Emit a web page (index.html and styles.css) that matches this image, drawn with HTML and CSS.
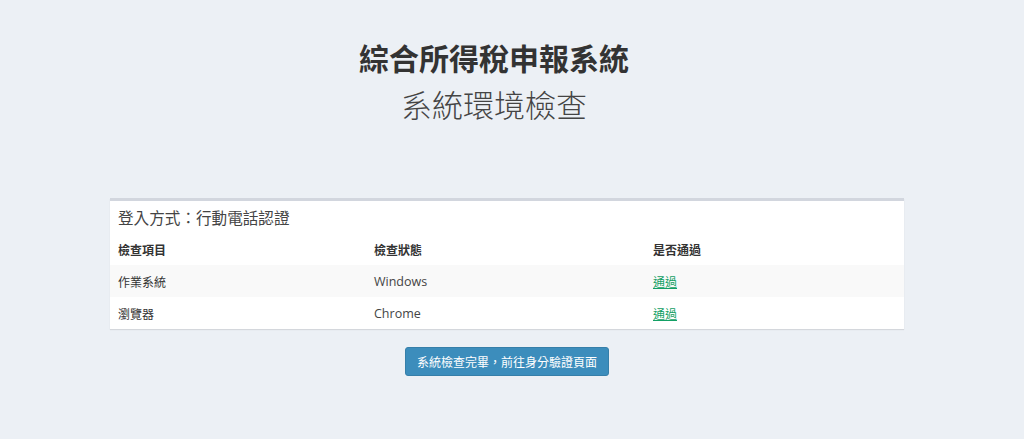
FILE: index.html
```html
<!DOCTYPE html>
<html lang="zh-Hant">
<head>
    <meta charset="UTF-8">
    <meta name="viewport" content="width=device-width, initial-scale=1.0">
    <title>系統環境檢查</title>
    <link rel="stylesheet" href="styles.css">
</head>
<body>
    <div class="container">
        <div class="page-header">
            <h1>綜合所得稅申報系統</h1>
            <h2>系統環境檢查</h2>
        </div>

        <div class="box">
            <div class="box-header">登入方式：行動電話認證</div>
            <table class="check-table">
                <thead>
                    <tr>
                        <th class="col-item">檢查項目</th>
                        <th class="col-status">檢查狀態</th>
                        <th>是否通過</th>
                    </tr>
                </thead>
                <tbody>
                    <tr>
                        <td>作業系統</td>
                        <td class="latin">Windows</td>
                        <td><a href="#" class="pass">通過</a></td>
                    </tr>
                    <tr>
                        <td>瀏覽器</td>
                        <td class="latin">Chrome</td>
                        <td><a href="#" class="pass">通過</a></td>
                    </tr>
                </tbody>
            </table>
        </div>

        <div class="actions">
            <button class="btn-primary">系統檢查完畢，前往身分驗證頁面</button>
        </div>
    </div>
</body>
</html>
```

FILE: styles.css
```css
/* Page */
body {
    background-color: #ecf0f5;
    color: #333;
    font-family: "Noto Sans CJK TC", "Noto Sans", sans-serif;
    margin: 0;
    padding: 0;
}

.container {
    width: 794px;
    margin-left: 110px;
}

/* Titles */
.page-header {
    text-align: center;
    padding: 37px 26px 0 0;
}

.page-header h1 {
    font-size: 30px;
    line-height: 40px;
    font-weight: 700;
    margin: 0;
    color: #333;
}

.page-header h2 {
    font-size: 31px;
    line-height: 40px;
    font-weight: 300;
    margin: 7px 0 0;
    color: #444;
}

/* Box */
.box {
    margin-top: 74px;
    background-color: #fff;
    border-top: 3px solid #d2d6de;
    box-shadow: 0 1px 1px rgba(0, 0, 0, 0.1);
}

.box-header {
    height: 32px;
    line-height: 32px;
    padding: 0 8px;
    font-size: 15.6px;
    color: #444;
}

/* Table */
.check-table {
    width: 100%;
    border-collapse: collapse;
    font-size: 12px;
}

.check-table th,
.check-table td {
    height: 32px;
    padding: 0 8px;
    text-align: left;
    vertical-align: middle;
}

.check-table th {
    font-weight: 700;
    color: #333;
}

.check-table .col-item {
    width: 240px;
}

.check-table .col-status {
    width: 263px;
}

.check-table tbody tr:nth-child(odd) {
    background-color: #f9f9f9;
}

.check-table .latin {
    font-family: "Open Sans", "Noto Sans", sans-serif;
    font-size: 12.5px;
    color: #444;
}

.pass {
    color: #13a065;
    text-decoration: underline;
}

/* Actions */
.actions {
    text-align: center;
    margin-top: 18px;
}

.btn-primary {
    background-color: #3c8dbc;
    border: 1px solid #367fa9;
    border-radius: 3px;
    color: #fff;
    font-family: "Noto Sans CJK TC", sans-serif;
    font-size: 12px;
    line-height: 15px;
    padding: 6px 11px;
    cursor: pointer;
}
```
